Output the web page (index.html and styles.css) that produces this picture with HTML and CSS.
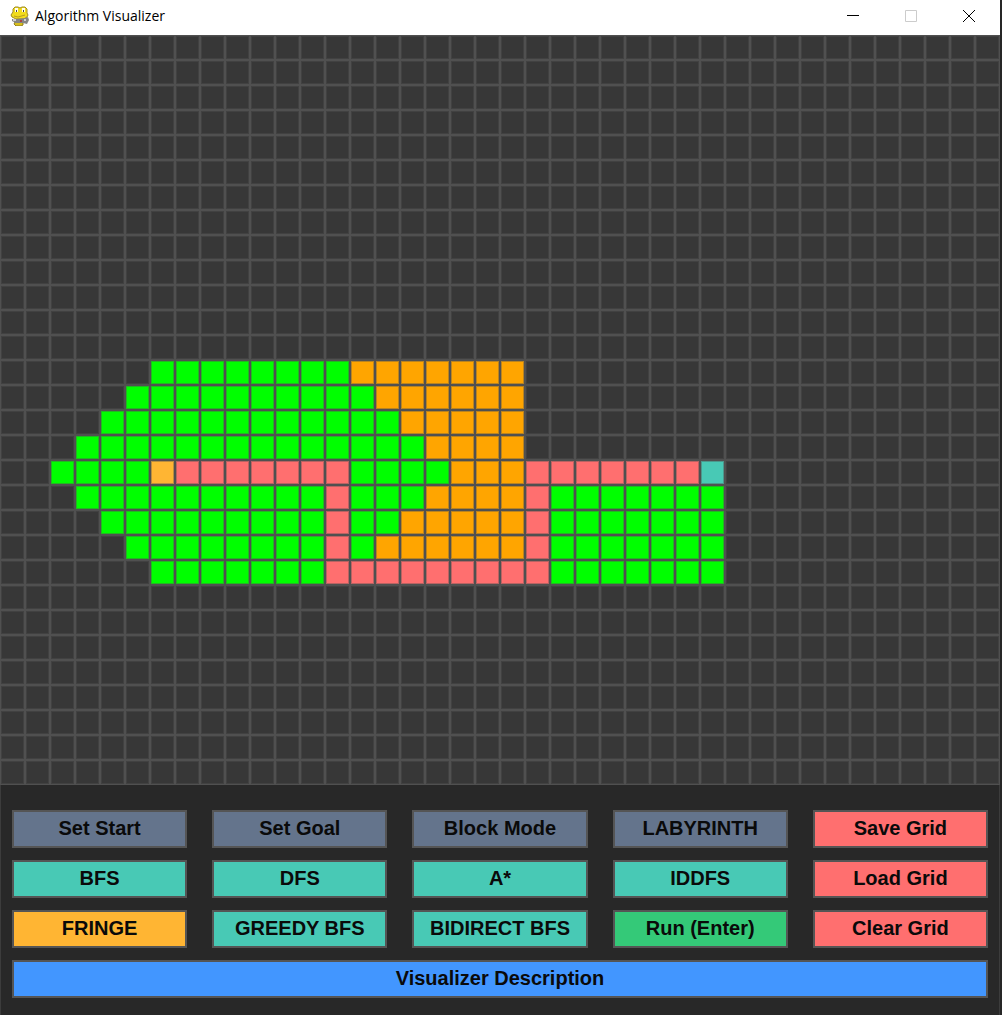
FILE: index.html
```html
<!DOCTYPE html>
<html lang="en">
<head>
<meta charset="utf-8">
<title>Algorithm Visualizer</title>
<link rel="stylesheet" href="styles.css">
</head>
<body>
<div class="window">
  <header class="titlebar">
    <svg class="app-icon" viewBox="0 0 20 20" aria-hidden="true">
      <path d="M5 16h8v3l-2 1H6l-2-2Z" fill="#d8bf1c" stroke="#8c7b20"/>
      <path d="M3 3 5 1H8L10 2 12 1H15L17 3V7L18 9 17 11 14 13H6L2 11 1 9 3 6Z" fill="#f2dc1e" stroke="#a08c24"/>
      <path d="M5 2h3v4H5zM12 2h3v4h-3z" fill="#fffdf0"/>
      <path d="M6 4h1v2H6zM13 4h1v2h-1z" fill="#444"/>
      <path d="M4 10 8 11 15 9" fill="none" stroke="#b89d1e"/>
      <path d="M2 13H7L15 12 18 11 19 14 17 18 13 17H6L2 15Z" fill="#858585"/>
      <path d="M3 13h3v2H3zM14 13h2v2h-2z" fill="#d0d0d0"/>
      <path d="M10 14h2v2h-2z" fill="#a44"/>
    </svg>
    <h1 class="title">Algorithm Visualizer</h1>
    <div class="controls">
      <button class="control" type="button" aria-label="Minimize"><svg viewBox="0 0 12 12"><path d="M0 5.5h12"/></svg></button>
      <button class="control" type="button" aria-label="Maximize" disabled><svg viewBox="0 0 12 12"><path d="M.5.5h11v11H.5z"/></svg></button>
      <button class="control" type="button" aria-label="Close"><svg viewBox="0 0 12 12"><path d="M0 0 12 12M12 0 0 12"/></svg></button>
    </div>
  </header>
  <main>
    <div class="board" id="board" role="img" aria-label="Search grid"></div>
    <div class="panel">
      <button class="btn slate" type="button">Set Start</button>
      <button class="btn slate" type="button">Set Goal</button>
      <button class="btn slate" type="button">Block Mode</button>
      <button class="btn slate" type="button">LABYRINTH</button>
      <button class="btn coral" type="button">Save Grid</button>
      <button class="btn teal" type="button">BFS</button>
      <button class="btn teal" type="button">DFS</button>
      <button class="btn teal" type="button">A*</button>
      <button class="btn teal" type="button">IDDFS</button>
      <button class="btn coral" type="button">Load Grid</button>
      <button class="btn amber" type="button">FRINGE</button>
      <button class="btn teal" type="button">GREEDY BFS</button>
      <button class="btn teal" type="button">BIDIRECT BFS</button>
      <button class="btn green" type="button">Run (Enter)</button>
      <button class="btn coral" type="button">Clear Grid</button>
      <button class="btn blue wide" type="button">Visualizer Description</button>
    </div>
  </main>
</div>
<script src="board.js"></script>
</body>
</html>
```
FILE: board.js
```js
const COLS = 40;
const ROWS = 30;

// Runs of coloured cells per row: [kind, first column, last column].
const runs = {
  13: [["visited", 6, 13], ["frontier", 14, 20]],
  14: [["visited", 5, 14], ["frontier", 15, 20]],
  15: [["visited", 4, 15], ["frontier", 16, 20]],
  16: [["visited", 3, 16], ["frontier", 17, 20]],
  17: [["visited", 2, 5], ["start", 6, 6], ["path", 7, 13], ["visited", 14, 17], ["frontier", 18, 20], ["path", 21, 27], ["goal", 28, 28]],
  18: [["visited", 3, 12], ["path", 13, 13], ["visited", 14, 16], ["frontier", 17, 20], ["path", 21, 21], ["visited", 22, 28]],
  19: [["visited", 4, 12], ["path", 13, 13], ["visited", 14, 15], ["frontier", 16, 20], ["path", 21, 21], ["visited", 22, 28]],
  20: [["visited", 5, 12], ["path", 13, 13], ["visited", 14, 14], ["frontier", 15, 20], ["path", 21, 21], ["visited", 22, 28]],
  21: [["visited", 6, 12], ["path", 13, 21], ["visited", 22, 28]]
};

const board = document.getElementById("board");
for (let row = 0; row < ROWS; row++) {
  for (let col = 0; col < COLS; col++) {
    const cell = document.createElement("div");
    const run = (runs[row] || []).find(([, from, to]) => col >= from && col <= to);
    cell.className = run ? "cell " + run[0] : "cell";
    board.appendChild(cell);
  }
}
```
FILE: styles.css
```css
* {
  box-sizing: border-box;
}

body {
  margin: 0;
  background: #262626;
}

.window {
  margin-right: 2px;
  background: #282828;
}

.titlebar {
  display: flex;
  align-items: center;
  height: 35px;
  padding: 0 2px 4px 10px;
  background: #fff;
}

.app-icon {
  width: 20px;
  height: 20px;
}

.title {
  flex: 1;
  margin: 0 0 0 5px;
  color: #000;
  font: 400 14px/20px "Open Sans", "Noto Sans", sans-serif;
}

.controls {
  display: flex;
}

.control {
  display: grid;
  place-items: center;
  width: 58px;
  height: 30px;
  padding: 0;
  border: 0;
  background: none;
}

.control svg {
  width: 12px;
  height: 12px;
  fill: none;
  stroke: #000;
}

.control:disabled svg {
  stroke: #ccc;
}

.board {
  display: grid;
  grid-template-columns: repeat(40, 1fr);
}

.cell {
  aspect-ratio: 1;
  border: 1px solid #505050;
  background: #373737;
  box-shadow: inset 0 0 0 1px rgba(80, 80, 80, 0.4);
}

.visited {
  background: #00ff00;
}

.frontier {
  background: #ffa500;
}

.path {
  background: #ff6f6f;
}

.start {
  background: #ffb533;
}

.goal {
  background: #48c9b5;
}

.panel {
  display: grid;
  grid-template-columns: repeat(5, 1fr);
  gap: 12px 25px;
  padding: 25px 12px 17px;
  box-shadow: inset 1px 0 #3c3c3c, inset -1px 0 #3c3c3c;
}

.btn {
  height: 38px;
  padding: 0 0 2px;
  border: 2px solid #555;
  color: #0a0a0a;
  font: 700 20px/24px "Liberation Sans", Arial, sans-serif;
}

.wide {
  grid-column: 1 / -1;
}

.slate {
  background: #64748c;
}

.teal {
  background: #48c9b5;
}

.coral {
  background: #ff6f6f;
}

.amber {
  background: #ffb533;
}

.green {
  background: #34c978;
}

.blue {
  background: #4296ff;
}
```
